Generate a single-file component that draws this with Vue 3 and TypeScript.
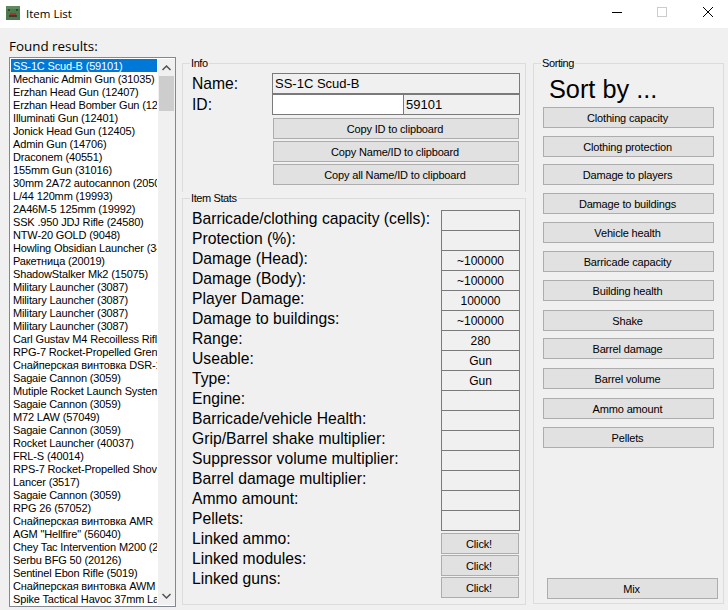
<template>
  <div class="window">
    <header class="titlebar">
      <svg class="app-icon" width="14" height="14" viewBox="0 0 14 14">
        <rect width="14" height="14" fill="#4d7a4d" />
        <rect x="0" y="0" width="14" height="3" fill="#5f8a5f" />
        <rect x="2" y="3" width="2" height="2" fill="#2c4a2c" />
        <rect x="10" y="3" width="2" height="2" fill="#2c4a2c" />
        <rect x="4" y="7" width="6" height="3" fill="#a83038" />
        <rect x="3" y="9" width="8" height="2" fill="#33402f" />
      </svg>
      <span class="title">Item List</span>
      <div class="controls">
        <svg width="46" height="28" viewBox="0 0 46 28"><path d="M22 12.5h10" stroke="#000" fill="none" /></svg>
        <svg width="46" height="28" viewBox="0 0 46 28"><rect x="21.5" y="7.5" width="9" height="9" stroke="#ccc" fill="none" /></svg>
        <svg width="46" height="28" viewBox="0 0 46 28"><path d="M21 7l10 10M31 7L21 17" stroke="#000" fill="none" /></svg>
      </div>
    </header>

    <main class="body">
      <section class="results">
        <div class="found">Found results:</div>
        <div class="listbox">
          <ul class="items">
            <li v-for="(item, i) in items" :key="i" :class="{ selected: i === 0 }">{{ item }}</li>
          </ul>
          <div class="scrollbar">
            <svg width="17" height="17" viewBox="0 0 17 17"><path d="M4.5 11l4-4 4 4" stroke="#505050" stroke-width="1.5" fill="none" /></svg>
            <div class="thumb"></div>
            <svg class="down" width="17" height="17" viewBox="0 0 17 17"><path d="M4.5 6l4 4 4-4" stroke="#505050" stroke-width="1.5" fill="none" /></svg>
          </div>
        </div>
      </section>

      <section class="middle">
        <fieldset class="group info">
          <legend>Info</legend>
          <div class="name-row">
            <label>Name:</label>
            <div class="box text">SS-1C Scud-B</div>
          </div>
          <div class="name-row id-row">
            <label>ID:</label>
            <div class="box input"></div>
            <div class="box text idval">59101</div>
          </div>
          <div class="copy">
            <button v-for="c in copyButtons" :key="c">{{ c }}</button>
          </div>
        </fieldset>

        <fieldset class="group stats">
          <legend>Item Stats</legend>
          <div class="stat-labels">
            <label v-for="s in stats" :key="s.label">{{ s.label }}</label>
            <label v-for="l in linked" :key="l">{{ l }}</label>
          </div>
          <div class="stat-values">
            <div v-for="s in stats" :key="s.label" class="box val">{{ s.value }}</div>
            <div class="links">
              <button v-for="l in linked" :key="l">Click!</button>
            </div>
          </div>
        </fieldset>
      </section>

      <fieldset class="group sorting">
        <legend>Sorting</legend>
        <div class="sort-title">Sort by ...</div>
        <div class="sort-buttons">
          <button v-for="b in sortButtons" :key="b.text" :style="{ marginTop: b.gap + 'px' }">{{ b.text }}</button>
        </div>
        <button class="mix">Mix</button>
      </fieldset>
    </main>
  </div>
</template>

<script setup lang="ts">
const items: string[] = [
  'SS-1C Scud-B (59101)',
  'Mechanic Admin Gun (31035)',
  'Erzhan Head Gun (12407)',
  'Erzhan Head Bomber Gun (12408)',
  'Illuminati Gun (12401)',
  'Jonick Head Gun (12405)',
  'Admin Gun (14706)',
  'Draconem (40551)',
  '155mm Gun (31016)',
  '30mm 2A72 autocannon (20500)',
  'L/44 120mm (19993)',
  '2A46M-5 125mm (19992)',
  'SSK .950 JDJ Rifle (24580)',
  'NTW-20 GOLD (9048)',
  'Howling Obsidian Launcher (3400)',
  'Ракетница (20019)',
  'ShadowStalker Mk2 (15075)',
  'Military Launcher (3087)',
  'Military Launcher (3087)',
  'Military Launcher (3087)',
  'Military Launcher (3087)',
  'Carl Gustav M4 Recoilless Rifle',
  'RPG-7 Rocket-Propelled Grenade',
  'Снайперская винтовка DSR-1',
  'Sagaie Cannon (3059)',
  'Mutiple Rocket Launch System',
  'Sagaie Cannon (3059)',
  'M72 LAW (57049)',
  'Sagaie Cannon (3059)',
  'Rocket Launcher (40037)',
  'FRL-S (40014)',
  'RPS-7 Rocket-Propelled Shovel',
  'Lancer (3517)',
  'Sagaie Cannon (3059)',
  'RPG 26 (57052)',
  'Снайперская винтовка AMR',
  'AGM "Hellfire" (56040)',
  'Chey Tac Intervention M200 (2',
  'Serbu BFG 50 (20126)',
  'Sentinel Ebon Rifle (5019)',
  'Снайперская винтовка AWM',
  'Spike Tactical Havoc 37mm Launcher',
]

const copyButtons: string[] = ['Copy ID to clipboard', 'Copy Name/ID to clipboard', 'Copy all Name/ID to clipboard']

const stats: { label: string; value: string }[] = [
  { label: 'Barricade/clothing capacity (cells):', value: '' },
  { label: 'Protection (%):', value: '' },
  { label: 'Damage (Head):', value: '~100000' },
  { label: 'Damage (Body):', value: '~100000' },
  { label: 'Player Damage:', value: '100000' },
  { label: 'Damage to buildings:', value: '~100000' },
  { label: 'Range:', value: '280' },
  { label: 'Useable:', value: 'Gun' },
  { label: 'Type:', value: 'Gun' },
  { label: 'Engine:', value: '' },
  { label: 'Barricade/vehicle Health:', value: '' },
  { label: 'Grip/Barrel shake multiplier:', value: '' },
  { label: 'Suppressor volume multiplier:', value: '' },
  { label: 'Barrel damage multiplier:', value: '' },
  { label: 'Ammo amount:', value: '' },
  { label: 'Pellets:', value: '' },
]

const linked: string[] = ['Linked ammo:', 'Linked modules:', 'Linked guns:']

const sortButtons: { text: string; gap: number }[] = [
  { text: 'Clothing capacity', gap: 0 },
  { text: 'Clothing protection', gap: 8 },
  { text: 'Damage to players', gap: 7 },
  { text: 'Damage to buildings', gap: 8 },
  { text: 'Vehicle health', gap: 8 },
  { text: 'Barricade capacity', gap: 8 },
  { text: 'Building health', gap: 8 },
  { text: 'Shake', gap: 9 },
  { text: 'Barrel damage', gap: 7 },
  { text: 'Barrel volume', gap: 9 },
  { text: 'Ammo amount', gap: 9 },
  { text: 'Pellets', gap: 8 },
]
</script>

<style>
html, body {
  margin: 0;
  background: #f0f0f0;
}
</style>

<style scoped>
.window {
  width: 728px;
  height: 610px;
  overflow: hidden;
  display: flex;
  flex-direction: column;
  font-family: "Liberation Sans", Arial, sans-serif;
  color: #000;
  background: #f0f0f0;
}

.titlebar {
  height: 28px;
  background: #fff;
  display: flex;
  align-items: center;
  padding-left: 6px;
  box-sizing: border-box;
}
.app-icon {
  margin-bottom: 2px;
}
.title {
  font-family: "Open Sans", sans-serif;
  font-size: 11.5px;
  margin-left: 6px;
  margin-bottom: 2px;
}
.controls {
  margin-left: auto;
  display: flex;
  height: 28px;
}

.body {
  flex: 1;
  display: flex;
  min-height: 0;
}

.results {
  width: 182px;
  padding-left: 9px;
  box-sizing: border-box;
  flex: none;
}
.found {
  font-family: "Open Sans", sans-serif;
  font-size: 13.4px;
  height: 29px;
  line-height: 18px;
  padding-top: 9px;
  box-sizing: border-box;
}
.listbox {
  width: 167px;
  height: 550px;
  box-sizing: border-box;
  border: 1px solid #828790;
  background: #fff;
  display: flex;
  overflow: hidden;
  padding: 1px 0 1px 1px;
}
.items {
  list-style: none;
  margin: 0 1px 0 0;
  padding: 0;
  width: 146px;
  flex: none;
  overflow: hidden;
}
.items li {
  height: 13px;
  line-height: 14px;
  font-size: 11px;
  letter-spacing: -0.15px;
  padding-left: 2px;
  white-space: nowrap;
  overflow: hidden;
}
.items li.selected {
  background: #0078d7;
  color: #fff;
}
.scrollbar {
  width: 17px;
  flex: none;
  background: #f0f0f0;
  display: flex;
  flex-direction: column;
  align-items: center;
}
.thumb {
  width: 15px;
  height: 35px;
  background: #cdcdcd;
}
.down {
  margin-top: auto;
}

.middle {
  width: 344px;
  flex: none;
  padding-top: 29px;
  box-sizing: border-box;
  display: flex;
  flex-direction: column;
}

.group {
  margin: 0;
  min-width: 0;
  border: 1px solid #dcdcdc;
  box-sizing: border-box;
  background: transparent;
}
.group legend {
  font-size: 11px;
  letter-spacing: -0.4px;
  line-height: 13px;
  padding: 0 1px;
  margin-left: -2px;
}

.info {
  height: 135px;
  padding: 3px 5px 0 9px;
  border-bottom: none;
}
.name-row {
  display: flex;
  height: 21px;
  align-items: stretch;
}
.name-row label {
  width: 80px;
  flex: none;
  font-size: 15.7px;
  line-height: 21px;
}
.box {
  box-sizing: border-box;
  border: 1px solid #7a7a7a;
  font-size: 13px;
}
.text {
  flex: 1;
  line-height: 19px;
  padding-left: 2px;
}
.input {
  width: 132px;
  flex: none;
  background: #fff;
}
.idval {
  margin-left: -1px;
}
.copy {
  display: flex;
  flex-direction: column;
  gap: 2px;
  margin: 3px 1px 0 81px;
}
button {
  height: 21px;
  box-sizing: border-box;
  border: 1px solid #adadad;
  background: #e1e1e1;
  font-family: "Liberation Sans", Arial, sans-serif;
  font-size: 11px;
  letter-spacing: -0.16px;
  color: #000;
  padding: 0 2px 0 0;
}

.stats {
  height: 413px;
  padding: 0 5px 0 9px;
  display: flex;
}
.stat-labels {
  flex: 1;
  margin-top: 4px;
  display: flex;
  flex-direction: column;
}
.stat-labels label {
  height: 20px;
  font-size: 15.7px;
  line-height: 20px;
  white-space: nowrap;
}
.stat-values {
  width: 79px;
  flex: none;
  margin-top: 5px;
  display: flex;
  flex-direction: column;
}
.val {
  height: 21px;
  flex: none;
  margin-bottom: -1px;
  text-align: center;
  font-size: 12px;
  line-height: 20px;
}
.links {
  margin-top: 3px;
  display: flex;
  flex-direction: column;
  gap: 1px;
  width: 78px;
}

.sorting {
  width: 191px;
  margin-left: 7px;
  flex: none;
  height: 547px;
  margin-top: 29px;
  padding: 0 9px 0 9px;
  display: flex;
  flex-direction: column;
}
.sort-title {
  font-size: 25.3px;
  line-height: 32px;
  padding: 3px 0 0 6px;
  height: 37px;
  box-sizing: border-box;
}
.sort-buttons {
  display: flex;
  flex-direction: column;
}
.mix {
  margin: auto -4px 4px 4px;
  flex: none;
}
</style>
